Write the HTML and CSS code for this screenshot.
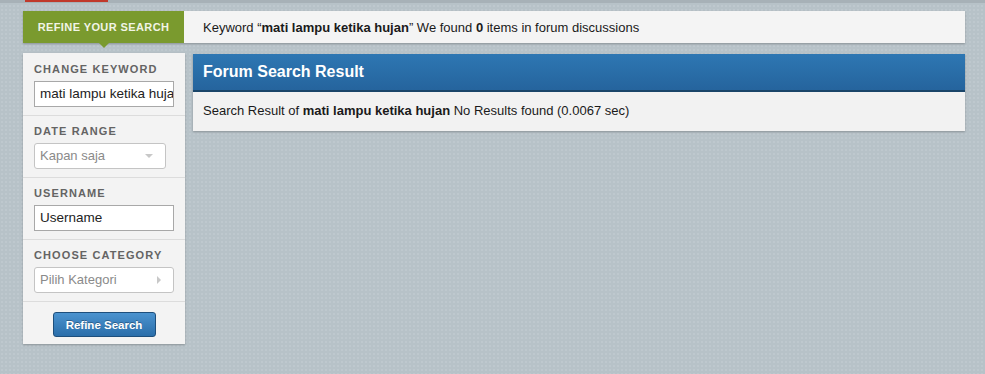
FILE: index.html
```html
<!DOCTYPE html>
<html>
<head>
<meta charset="utf-8">
<link rel="stylesheet" href="styles.css">
</head>
<body>
<div class="topstrip"><div class="redmark"></div></div>
<div class="page">
  <div class="refinebar">
    <div class="refine-tab">REFINE YOUR SEARCH</div>
    <div class="refine-msg"><span>Keyword &ldquo;<b>mati lampu ketika hujan</b>&rdquo; We found <b>0</b> items in forum discussions</span></div>
  </div>
  <div class="content">
    <aside class="sidebar">
      <div class="sect first">
        <div class="label">CHANGE KEYWORD</div>
        <div class="field">mati lampu ketika hujan</div>
      </div>
      <div class="sect">
        <div class="label">DATE RANGE</div>
        <div class="select narrow"><span>Kapan saja</span><span class="arrow-down"></span></div>
      </div>
      <div class="sect">
        <div class="label">USERNAME</div>
        <div class="field">Username</div>
      </div>
      <div class="sect">
        <div class="label">CHOOSE CATEGORY</div>
        <div class="select"><span>Pilih Kategori</span><span class="arrow-right"></span></div>
      </div>
      <div class="sect btnsect">
        <button class="btn">Refine Search</button>
      </div>
    </aside>
    <main class="result">
      <div class="result-head">Forum Search Result</div>
      <div class="result-body">Search Result of <b>mati lampu ketika hujan</b> No Results found (0.0067 sec)</div>
    </main>
  </div>
</div>
</body>
</html>
```
FILE: styles.css
```css
* { box-sizing: border-box; }
html, body { margin: 0; padding: 0; }
body {
  width: 985px;
  height: 374px;
  overflow: hidden;
  background-color: #b7c2c8;
  background-image: radial-gradient(rgba(255,255,255,0.10) 1px, transparent 1px);
  background-size: 4px 4px;
  font-family: "Liberation Sans", Arial, Helvetica, sans-serif;
  color: #222;
}
.topstrip {
  height: 3px;
  background: #a7b1b7;
}
.redmark {
  margin-left: 25px;
  width: 83px;
  height: 2px;
  background: #c0392b;
}
.page {
  padding-left: 23px;
  width: 965px;
}
.refinebar {
  margin-top: 8px;
  height: 32px;
  display: flex;
  background: #f4f4f4;
  box-shadow: 0 1px 2px rgba(0,0,0,0.25);
}
.refine-tab {
  position: relative;
  width: 161px;
  background: #7a9a2e;
  color: #f1f4e6;
  font-size: 11px;
  font-weight: bold;
  letter-spacing: 0.4px;
  display: flex;
  align-items: center;
  justify-content: center;
}
.refine-tab::after {
  content: "";
  position: absolute;
  left: 50%;
  bottom: -5px;
  margin-left: -5px;
  border-left: 5px solid transparent;
  border-right: 5px solid transparent;
  border-top: 5px solid #7a9a2e;
}
.refine-msg {
  display: flex;
  align-items: center;
  padding-left: 19px;
  font-size: 13px;
  color: #1a1a1a;
}
.content {
  margin-top: 10px;
  display: flex;
  align-items: flex-start;
  gap: 8px;
}
.sidebar {
  width: 162px;
  background: #f3f3f3;
  box-shadow: 0 1px 2px rgba(0,0,0,0.25);
}
.sect {
  border-top: 1px solid #dcdcdc;
  padding: 9px 11px 8px;
}
.sect.first {
  border-top: none;
  padding-top: 10px;
}
.label {
  font-size: 11px;
  line-height: 13px;
  font-weight: bold;
  letter-spacing: 1.1px;
  color: #646464;
  margin-bottom: 5px;
  white-space: nowrap;
}
.field, .select {
  height: 26px;
  width: 140px;
  background: #fff;
  border: 1px solid #a8a8a8;
  font-size: 13.5px;
  line-height: 24px;
  padding-left: 5px;
  white-space: nowrap;
  overflow: hidden;
}
.select {
  display: flex;
  align-items: center;
  justify-content: space-between;
  color: #8a8a8a;
  border-color: #c4c4c4;
  border-radius: 3px;
  padding-right: 12px;
  font-size: 13px;
}
.select.narrow { width: 132px; }
.arrow-down {
  width: 0; height: 0;
  border-left: 4px solid transparent;
  border-right: 4px solid transparent;
  border-top: 4px solid #c8c8c8;
}
.arrow-right {
  width: 0; height: 0;
  border-top: 4px solid transparent;
  border-bottom: 4px solid transparent;
  border-left: 4px solid #c8c8c8;
}
.btnsect {
  padding: 10px 0 7px;
  display: flex;
  justify-content: center;
}
.btn {
  width: 103px;
  height: 25px;
  border: 1px solid #1d4f7c;
  border-radius: 3px;
  background: linear-gradient(#4b93cf, #2a6eaa);
  color: #fff;
  font-family: "Liberation Sans", Arial, sans-serif;
  font-size: 11.5px;
  font-weight: bold;
  text-shadow: 0 -1px 0 rgba(0,0,0,0.3);
  padding: 0;
}
.result {
  margin-top: 1px;
  width: 772px;
  background: #f2f2f2;
  box-shadow: 0 1px 2px rgba(0,0,0,0.25);
}
.result-head {
  height: 38px;
  background: linear-gradient(#2e77b3, #25649d);
  border-bottom: 2px solid #1a4569;
  color: #fff;
  font-size: 16px;
  font-weight: bold;
  padding-left: 10px;
  line-height: 36px;
}
.result-body {
  height: 39px;
  font-size: 13px;
  color: #1a1a1a;
  padding-left: 10px;
  line-height: 37px;
}
```
